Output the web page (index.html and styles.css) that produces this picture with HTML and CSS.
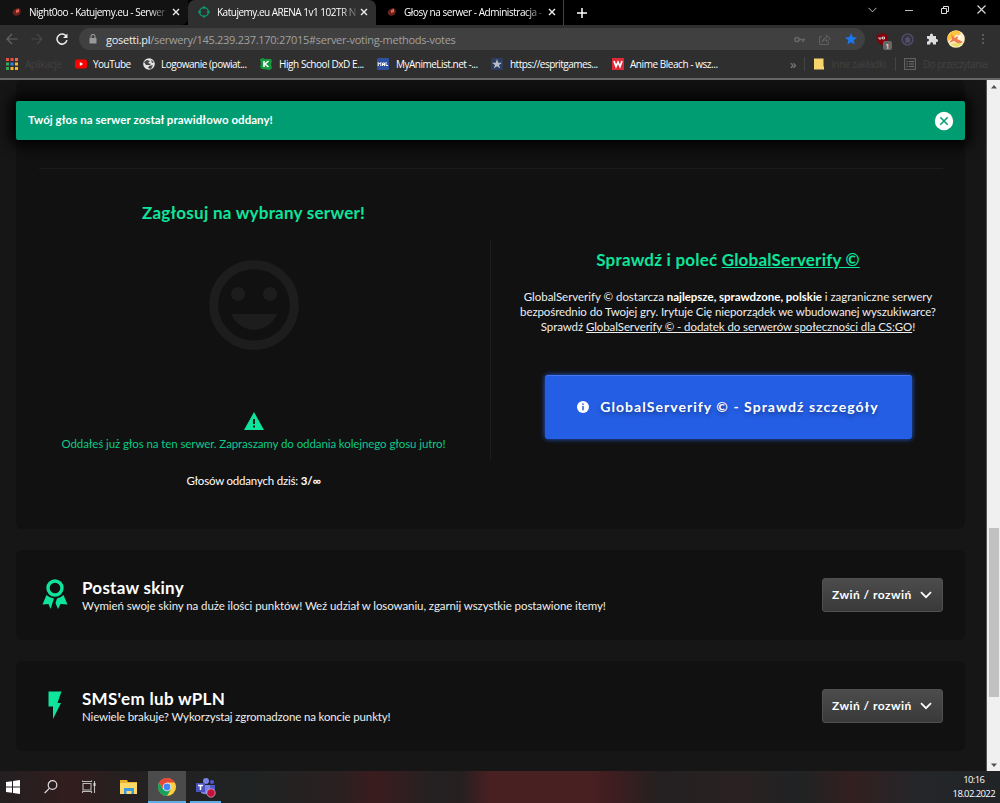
FILE: index.html
```
<!DOCTYPE html>
<html lang="pl">
<head>
  <meta charset="UTF-8" />
  <meta name="viewport" content="width=device-width, initial-scale=1.0" />
  <title>Katujemy.eu ARENA 1v1 102TR</title>
  <link rel="stylesheet" href="styles.css">
</head>
<body>

  <!-- Tabs -->
  <div class="tabs">
    <div class="tab tab-first">
      <svg class="tab-icon" viewBox="0 0 12 12"><path d="M2 8Q1 4 5 3Q7 1 9 3Q11 6 8 9Q4 11 2 8Z" fill="#6d211d"/><path d="M5 4L8 3L8 6L5 7Z" fill="#df6553"/></svg>
      <span class="tab-title t1">Night0oo - Katujemy.eu - Serwer</span>
      <svg class="tab-close" viewBox="0 0 8 8"><path d="M1 1L7 7M7 1L1 7"/></svg>
    </div>
    <div class="tab tab-active">
      <svg class="tab-icon" viewBox="0 0 12 12"><circle cx="6" cy="6" r="4.4" fill="none" stroke="#0a9a70" stroke-width="1.4"/><path d="M6 0V3M6 9V12M0 6H3M9 6H12" stroke="#0a9a70" stroke-width="1.3"/></svg>
      <span class="tab-title t2">Katujemy.eu ARENA 1v1 102TR N</span>
      <svg class="tab-close" viewBox="0 0 8 8"><path d="M1 1L7 7M7 1L1 7"/></svg>
    </div>
    <div class="tab tab-last">
      <svg class="tab-icon" viewBox="0 0 12 12"><path d="M2 8Q1 4 5 3Q7 1 9 3Q11 6 8 9Q4 11 2 8Z" fill="#6d211d"/><path d="M5 4L8 3L8 6L5 7Z" fill="#df6553"/></svg>
      <span class="tab-title t3">Głosy na serwer - Administracja -</span>
      <svg class="tab-close" viewBox="0 0 8 8"><path d="M1 1L7 7M7 1L1 7"/></svg>
    </div>
    <svg class="tab-new" viewBox="0 0 10 10"><path d="M5 0V10M0 5H10" stroke="#fff" stroke-width="1.5"/></svg>
    <div class="window-buttons">
      <svg width="9" height="6" viewBox="0 0 9 6"><path d="M.5 .8L4.5 4.8L8.5 .8" fill="none" stroke="#bbb"/></svg>
      <svg width="8" height="8" viewBox="0 0 8 8"><path d="M0 4.5H8" stroke="#bbb"/></svg>
      <svg width="8" height="8" viewBox="0 0 8 8"><path d="M.5 2.5H5.5V7.5H.5ZM2.5 2.5V.5H7.5V5.5H5.5" fill="none" stroke="#ddd"/></svg>
      <svg width="9" height="9" viewBox="0 0 9 9"><path d="M.5 .5L8.5 8.5M8.5 .5L.5 8.5" stroke="#ddd" stroke-width="1.1"/></svg>
    </div>
  </div>

  <!-- Address bar -->
  <div class="toolbar">
    <svg class="nav" viewBox="0 0 12 12"><path d="M6 1L1 6L6 11M1 6H11.500" fill="none" stroke="#666" stroke-width="1.2"/></svg>
    <svg class="nav" viewBox="0 0 12 12"><path d="M6 1L11 6L6 11M11 6H.5" fill="none" stroke="#484848" stroke-width="1.2"/></svg>
    <svg class="nav" viewBox="0 0 12 12"><path d="M10.300 3.500A5 5 0 1 0 10.900 7.200" fill="none" stroke="#eee" stroke-width="1.5"/><path d="M11.500 .5V5H7Z" fill="#eee"/></svg>
    <div class="address">
      <svg class="lock" viewBox="0 0 8 10"><path d="M2 4V2.500A2 2 0 0 1 6 2.500V4" fill="none" stroke="#999" stroke-width="1.1"/><rect x=".5" y="4" width="7" height="5.500" rx=".6" fill="#999"/></svg>
      <span class="url"><b>gosetti.pl</b>/serwery/145.239.237.170:27015#server-voting-methods-votes</span>
      <svg class="key" width="11" height="7" viewBox="0 0 11 7"><circle cx="3" cy="3.500" r="2.100" fill="none" stroke="#666" stroke-width="1.500"/><path d="M5 3.500H11M9 3.500V6" stroke="#666" stroke-width="1.700"/></svg>
      <svg width="12" height="11" viewBox="0 0 12 11"><path d="M3 2.500H.6V10.400H9.500V8M3 8Q3.500 4 7.500 3.800V1.200L11.300 4.600L7.500 7.700V5.800Q5 5.500 3 8Z" fill="none" stroke="#626262"/></svg>
      <svg width="12" height="12" viewBox="0 0 12 12"><path d="M6 0L7.700 4.100L12 4.500L8.700 7.300L9.700 11.600L6 9.300L2.300 11.600L3.300 7.300L0 4.500L4.300 4.100Z" fill="#1b75ec"/></svg>
    </div>
    <div class="extensions">
      <span class="ublock">
        <svg width="12" height="12" viewBox="0 0 12 12"><path d="M6 0Q8 1.500 11.300 1.500V6Q11 9.500 6 12Q1 9.500 .7 6V1.500Q4 1.500 6 0Z" fill="#84000a"/><path d="M3 4V6H5V4M6.500 4H8.500V6H6.500Z" stroke="#ddd" stroke-width=".9" fill="none"/></svg>
        <span class="count">1</span>
      </span>
      <svg width="13" height="13" viewBox="0 0 13 13"><circle cx="6.500" cy="6.500" r="5.500" fill="#35333f" stroke="#514a63" stroke-width="1.500"/><path d="M4 5H6V3.500H7.500V5H9V9.500H4V8L5.500 7L4 6.500Z" fill="#54506b"/></svg>
      <svg width="12" height="12" viewBox="0 0 12 12"><path d="M1 3H4V2A1.500 1.500 0 0 1 7 2V3H10V6H10.500A1.500 1.500 0 0 1 10.500 9H10V11.500H7V10.500A1.300 1.300 0 0 0 4.300 10.500V11.500H1V8.500H1.600A1.300 1.300 0 0 0 1.600 5.700H1Z" fill="#ddd"/></svg>
      <svg class="avatar" width="18" height="18" viewBox="0 0 18 18"><circle cx="9" cy="9" r="8.800" fill="#fff0c7"/><path d="M1 5Q5 0 12 1L14 4L9 5L6 8L1 11Z" fill="#ffc340"/><path d="M4 4L8 8L13 4L10 9L16 12L12 14L7 11L2 13L5 9Z" fill="#ef7a50"/><path d="M3 14Q8 12 15 14Q10 20 3 14Z" fill="#e3df6a"/><path d="M10 6L14 5L13 9Z" fill="#fff"/></svg>
      <svg width="4" height="12" viewBox="0 0 4 12"><path d="M1 1H3V3H1ZM1 5H3V7H1ZM1 9H3V11H1Z" fill="#5a5a5a"/></svg>
    </div>
  </div>

  <!-- Bookmarks -->
  <div class="bookmarks">
    <div class="bm bm-apps">
      <svg viewBox="0 0 12 12"><path d="M0 0H3V3H0ZM4.500 0H7.500V3H4.500Z" fill="#e45145"/><path d="M9 0H12V3H9Z" fill="#e8694c"/><path d="M0 4.500H3V7.500H0ZM0 9H3V12H0Z" fill="#31a85a"/><path d="M4.500 4.500H7.500V7.500H4.500Z" fill="#3284ed"/><path d="M9 4.500H12V7.500H9ZM4.500 9H7.500V12H4.500ZM9 9H12V12H9Z" fill="#f3b92d"/></svg>
      <span class="dim">Aplikacje</span>
    </div>
    <div class="bm bm-yt">
      <svg viewBox="0 0 12 12"><rect y="1.500" width="12" height="9" rx="2" fill="#f00"/><path d="M4.800 4V8L8.200 6Z" fill="#fff"/></svg>
      <span>YouTube</span>
    </div>
    <div class="bm bm-log">
      <svg viewBox="0 0 12 12"><circle cx="6" cy="6" r="5.800" fill="#e4e4e4"/><path d="M1 4L4 2L7 3L5 5L8 6L7 7H3ZM8 2L11 4L9 5ZM6 8L10 7L8 11L5 10Z" fill="#444"/></svg>
      <span>Logowanie (powiat...</span>
    </div>
    <div class="bm bm-dxd">
      <svg viewBox="0 0 12 12"><path d="M0 1L2 .5L3 0L5 1H11L12 3L11 6L12 10L10 12L2 11L0 9L1 6Z" fill="#14993d"/><path d="M4 3V9M8.500 3L5 6L8.500 9" fill="none" stroke="#fff" stroke-width="1.600"/></svg>
      <span>High School DxD E...</span>
    </div>
    <div class="bm bm-mal">
      <svg viewBox="0 0 12 12"><rect width="12" height="12" rx="1" fill="#2e51a2"/><path d="M1.200 8V4.500L2.500 6L3.800 4.500V8M5.500 8V5H7.500V8M5.500 6.500H7.500M9 4V7.500H11" fill="none" stroke="#fff"/></svg>
      <span>MyAnimeList.net -...</span>
    </div>
    <div class="bm bm-esp">
      <svg viewBox="0 0 12 12"><rect width="12" height="12" fill="#2d3d60"/><path d="M6 1L7.300 4.700H11L8 7L9.200 10.500L6 8.300L2.800 10.500L4 7L1 4.700H4.700Z" fill="#b8bdc8"/></svg>
      <span>https://espritgames...</span>
    </div>
    <div class="bm bm-wsz">
      <svg viewBox="0 0 12 12"><rect width="12" height="12" fill="#df2838"/><path d="M2 3L4 8.500L6 4L8 8.500L10 3" fill="none" stroke="#fff" stroke-width="1.700"/></svg>
      <span>Anime Bleach - wsz...</span>
    </div>
    <span class="more">»</span>
    <div class="bm bm-other">
      <svg viewBox="0 0 12 12"><path d="M1 .5H10.500V8.500H11V11.500H1Z" fill="#f6d66c"/></svg>
      <span class="dim">Inne zakładki</span>
    </div>
    <div class="bm bm-read">
      <svg viewBox="0 0 12 12"><rect x=".6" y=".6" width="10.800" height="10.800" fill="none" stroke="#66686b"/><path d="M2.500 3.500H4M5 3.500H10M2.500 6H4M5 6H10M2.500 8.500H4M5 8.500H10" stroke="#707275"/></svg>
      <span class="dim">Do przeczytania</span>
    </div>
  </div>

  <!-- Page -->
  <div class="viewport">
    <div class="page">
      <div class="alert">
        <span>Twój głos na serwer został prawidłowo oddany!</span>
        <svg width="20" height="20" viewBox="0 0 20 20"><circle cx="10" cy="10" r="9.200" fill="#fff"/><path d="M6.300 6.300L13.700 13.700M13.700 6.300L6.300 13.700" stroke="#009c72" stroke-width="1.500"/></svg>
      </div>

      <div class="panel vote">
        <div class="columns">
          <div class="col-vote">
            <h2 class="vote-title">Zagłosuj na wybrany serwer!</h2>
            <svg class="smile" viewBox="0 0 90 90"><circle cx="45" cy="45" r="40.300" fill="none" stroke="#1d1d1d" stroke-width="9"/><circle cx="29" cy="34" r="7" fill="#1d1d1d"/><circle cx="61" cy="34" r="7" fill="#1d1d1d"/><path d="M22 54H68C59 75 31 75 22 54Z" fill="#1d1d1d"/></svg>
            <svg class="warn" viewBox="0 0 20 18"><path d="M10 0L20 18H0Z" fill="#0ee49b"/><path d="M10 7V12M10 13.500V15.500" stroke="#111" stroke-width="1.900"/></svg>
            <p class="voted">Oddałeś już głos na ten serwer. Zapraszamy do oddania kolejnego głosu jutro!</p>
            <p class="today">Głosów oddanych dziś: <b>3/∞</b></p>
          </div>
          <div class="split"></div>
          <div class="col-promo">
            <h2 class="promo-title">Sprawdź i poleć <u>GlobalServerify ©</u></h2>
            <p class="promo-text">
              <span class="p1">GlobalServerify © dostarcza <b>najlepsze, sprawdzone, polskie</b> i zagraniczne serwery</span><br>
              <span class="p2">bezpośrednio do Twojej gry. Irytuje Cię nieporządek we wbudowanej wyszukiwarce?</span><br>
              <span class="p3">Sprawdź <u>GlobalServerify © - dodatek do serwerów społeczności dla CS:GO</u>!</span>
            </p>
            <button class="promo-btn">
              <svg width="12" height="12" viewBox="0 0 12 12"><circle cx="6" cy="6" r="6" fill="#fff"/><path d="M6 2.500V4M6 5V9.300" stroke="#245ee5" stroke-width="1.500"/></svg>
              <span>GlobalServerify © - Sprawdź szczegóły</span>
            </button>
          </div>
        </div>
      </div>

      <div class="panel method">
        <svg class="method-icon" viewBox="0 0 26 30"><circle cx="13" cy="9" r="7" fill="none" stroke="#0ee49b" stroke-width="3.400"/><path d="M4.500 16Q7.500 19 12 19.500L8.500 30L6.500 25L.5 25.500Z" fill="#0ee49b"/><path d="M21.500 16Q18.500 19 15 19.500L13.500 24L16 30L18.500 25L25.500 25.500Z" fill="#0ee49b"/></svg>
        <div class="method-text">
          <h3 class="m1">Postaw skiny</h3>
          <p class="d1">Wymień swoje skiny na duże ilości punktów! Weź udział w losowaniu, zgarnij wszystkie postawione itemy!</p>
        </div>
        <button class="toggle"><span>Zwiń / rozwiń</span><svg width="12" height="8" viewBox="0 0 12 8"><path d="M1 1.200L6 6.200L11 1.200" fill="none" stroke="#fff" stroke-width="1.700"/></svg></button>
      </div>

      <div class="panel method">
        <svg class="method-icon" viewBox="0 0 26 30"><path d="M6.500 1.500H19.500L15.500 13H19L11 29V16.500H6.500Z" fill="#0ee49b"/></svg>
        <div class="method-text">
          <h3 class="m2">SMS'em lub wPLN</h3>
          <p class="d2">Niewiele brakuje? Wykorzystaj zgromadzone na koncie punkty!</p>
        </div>
        <button class="toggle"><span>Zwiń / rozwiń</span><svg width="12" height="8" viewBox="0 0 12 8"><path d="M1 1.200L6 6.200L11 1.200" fill="none" stroke="#fff" stroke-width="1.700"/></svg></button>
      </div>
    </div>

    <div class="scrollbar">
      <svg width="6" height="4" viewBox="0 0 6 4"><path d="M0 3.500L3 0L6 3.500Z" fill="#505050"/></svg>
      <div class="thumb"></div>
      <svg width="6" height="4" viewBox="0 0 6 4"><path d="M0 .5L3 4L6 .5Z" fill="#505050"/></svg>
    </div>
  </div>

  <!-- Taskbar -->
  <div class="taskbar">
    <div class="task"><svg width="14" height="14" viewBox="0 0 14 14"><path d="M0 2L6 1.200V6.500H0ZM7 1L14 0V6.500H7ZM0 7.500H6V12.800L0 12ZM7 7.500H14V14L7 13Z" fill="#fff"/></svg></div>
    <div class="task"><svg width="14" height="14" viewBox="0 0 14 14"><circle cx="8.500" cy="5" r="4.300" fill="none" stroke="#ddd" stroke-width="1.200"/><path d="M5.300 8.300L.7 13" stroke="#ddd" stroke-width="1.200"/></svg></div>
    <div class="task"><svg width="14" height="14" viewBox="0 0 14 14"><path d="M1 3.500H9V10H1ZM.5 2V.5M9.500 .5V2M.5 1.500H9.500M.5 13V11.500H9.500V13M12.500 1V3M12.500 6V13" fill="none" stroke="#bbb" stroke-width="1.100"/><path d="M11.500 3H13.500V6H11.500Z" fill="#ddd"/></svg></div>
    <div class="task"><svg width="18" height="16" viewBox="0 0 18 16"><path d="M0 1H7L8 3H17V15H0Z" fill="#edb22b"/><path d="M0 4H17V15H0Z" fill="#ffd968"/><path d="M4 9H14V15H11.500V12H6.500V15H4Z" fill="#3b9be0"/></svg></div>
    <div class="task task-chrome"><svg width="18" height="18" viewBox="0 0 18 18"><circle cx="9" cy="9" r="9" fill="#ffcf3f"/><path d="M1.200 4.500A9 9 0 0 1 16.800 4.500H9L5.100 11.200Z" fill="#e5483a"/><path d="M1.200 4.500L5.100 11.250L12.900 11.250L9 18A9 9 0 0 1 1.200 4.500Z" fill="#18a05c"/><circle cx="9" cy="9" r="4.300" fill="#f4f4f4"/><circle cx="9" cy="9" r="3.400" fill="#4285f4"/></svg></div>
    <div class="task task-teams"><svg width="21" height="20" viewBox="0 0 21 20"><circle cx="11" cy="3" r="3" fill="#7b83eb"/><circle cx="17" cy="4" r="2.100" fill="#5059c9"/><path d="M6 7H15V14Q12 18 6 15Z" fill="#7b83eb"/><path d="M15 7H20V12Q18 15 15 14Z" fill="#5059c9"/><rect x="1" y="5" width="9" height="9" fill="#4b53bc"/><path d="M3 7.500H8M5.500 7.500V12" stroke="#fff" stroke-width="1.500"/><circle cx="16" cy="15" r="4.200" fill="#c4103b" stroke="#ddd" stroke-width=".6"/></svg></div>
    <div class="clock"><span>10:16</span><span>18.02.2022</span></div>
  </div>

</body>
</html>
```
FILE: styles.css
```
html, body {
  height: 100%;
  margin: 0;
  padding: 0;
}

body {
  background: #161616;
  color: #fff;
  font-family: 'Open Sans', 'Noto Sans', sans-serif;
  font-size: 10px;
  display: flex;
  flex-direction: column;
  overflow: hidden;
}

* {
  box-sizing: border-box;
}

svg {
  display: block;
  flex-shrink: 0;
}

span {
  white-space: nowrap;
}

h2, h3, p {
  margin: 0;
}

/* browser tabs */
.tabs {
  height: 25px;
  background: #000;
  display: flex;
  align-items: center;
  flex-shrink: 0;
}

.tab {
  width: 188px;
  height: 25px;
  padding: 0 8px 1px 10px;
  display: flex;
  align-items: center;
}

.tab-first {
  background: #121212;
  border-radius: 0 0 7px 0;
  padding-left: 11px;
}

.tab-active {
  background: #2f2f2f;
  border-radius: 7px 7px 0 0;
}

.tab-last {
  border-right: 1px solid #444;
  padding-right: 7px;
}

.tab-icon {
  width: 12px;
  height: 12px;
  margin-right: 6px;
}

.tab-active .tab-icon {
  margin-right: 7px;
}

.tab-title {
  mask-image: linear-gradient(to right, #000 88%, rgba(0,0,0,0.2));
}

.t1 {
  letter-spacing: -0.47px;
}

.t2 {
  letter-spacing: -0.5px;
}

.t3 {
  letter-spacing: -0.45px;
}

.tab-close {
  width: 8px;
  height: 8px;
  margin-left: auto;
  stroke: #eee;
  stroke-width: 1.4;
}

.tab-new {
  width: 10px;
  height: 10px;
  margin-left: 13px;
}

.window-buttons {
  margin-left: auto;
  padding: 0 14px 6px 0;
  display: flex;
  align-items: center;
  gap: 28px;
}

/* address bar */
.toolbar {
  height: 28px;
  background: #2f2f2f;
  display: flex;
  align-items: center;
  flex-shrink: 0;
  padding-left: 6px;
}

.nav {
  width: 12px;
  height: 12px;
  margin-right: 13px;
}

.address {
  width: 786px;
  height: 22px;
  margin-left: -2px;
  border-radius: 11px;
  background: #404040;
  display: flex;
  align-items: center;
  padding: 0 8px 0 10px;
  gap: 14px;
}

.lock {
  width: 8px;
  height: 10px;
}

.url {
  color: #a0a0a0;
  font-size: 11px;
  letter-spacing: -0.28px;
  margin-left: -5px;
}

.url b {
  color: #eee;
  font-weight: 400;
}

.key {
  margin-left: auto;
}

.extensions {
  flex: 1;
  display: flex;
  align-items: center;
  justify-content: space-between;
  padding: 0 15px 0 11px;
}

.avatar {
  margin: 0 4px 0 -4px;
}

.ublock {
  position: relative;
}

.count {
  position: absolute;
  left: 7px;
  top: 8px;
  width: 9px;
  height: 9px;
  border-radius: 2px;
  background: #666;
  font-size: 8px;
  line-height: 9px;
  text-align: center;
}

/* bookmarks */
.bookmarks {
  height: 27px;
  background: #2f2f2f;
  border-bottom: 2px solid #666;
  display: flex;
  align-items: center;
  flex-shrink: 0;
  padding: 0 0 3px 6px;
}

.bm {
  display: flex;
  align-items: center;
  gap: 6px;
}

.bm svg {
  width: 12px;
  height: 12px;
}

.bm-apps {
  width: 69px;
  gap: 7px;
  letter-spacing: -0.55px;
}

.bm-yt {
  width: 68px;
  letter-spacing: -0.5px;
}

.bm-log {
  width: 117px;
  letter-spacing: -0.48px;
}

.bm-dxd {
  width: 117px;
  gap: 7px;
  letter-spacing: -0.43px;
}

.bm-mal {
  width: 114px;
  gap: 7px;
  letter-spacing: -0.5px;
}

.bm-esp {
  width: 121px;
  gap: 7px;
  letter-spacing: -0.53px;
}

.bm-wsz {
  width: 178px;
  letter-spacing: -0.45px;
}

.more {
  width: 14px;
  font-size: 13px;
  line-height: 14px;
  color: #888;
}

.bm-other {
  width: 91px;
  border-left: 1px solid #444;
  padding-left: 8px;
  letter-spacing: -0.45px;
}

.bm-read {
  border-left: 1px solid #444;
  padding-left: 8px;
  gap: 7px;
  letter-spacing: -0.65px;
}

.dim {
  color: #414141;
}

/* page */
.viewport {
  flex: 1;
  min-height: 0;
  display: flex;
  font-family: Lato, 'Open Sans', sans-serif;
  font-size: 11.5px;
}

.page {
  position: relative;
  flex: 1;
  padding: 0 21px 0 16px;
  border-right: 1px solid #555;
  overflow: hidden;
}

.alert {
  position: absolute;
  left: 16px;
  right: 21px;
  top: 21px;
  height: 39px;
  padding: 0 11px 0 12px;
  display: flex;
  align-items: center;
  justify-content: space-between;
  background: #009c72;
  border-radius: 2px;
  box-shadow: 0 0 14px 5px #000;
  font-weight: 700;
}

.alert span {
  letter-spacing: 0.05px;
  padding-bottom: 2px;
}

.panel {
  background: #111;
  border-radius: 6px;
  margin-bottom: 21px;
}

.vote {
  height: 449px;
  padding: 88px 22px 0 23px;
}

.columns {
  border-top: 1px solid #1c1c1c;
  display: grid;
  grid-template-columns: 429px 1px 430px;
  column-gap: 22px;
  text-align: center;
}

.col-vote {
  display: flex;
  flex-direction: column;
  align-items: center;
}

h2 {
  color: #0ee49b;
  font-size: 17px;
  line-height: 22px;
  white-space: nowrap;
}

.vote-title {
  margin-top: 33px;
  letter-spacing: 0.25px;
}

.smile {
  width: 90px;
  height: 90px;
  margin-top: 36px;
}

.warn {
  width: 20px;
  height: 18px;
  margin-top: 62px;
}

.voted {
  color: #0cc98a;
  line-height: 16px;
  margin-top: 6px;
  letter-spacing: -0.09px;
  white-space: nowrap;
}

.today {
  line-height: 16px;
  margin-top: 21px;
  letter-spacing: -0.2px;
}

.split {
  height: 220px;
  margin-top: 71px;
  background: #1d1d1d;
}

.col-promo {
  padding-top: 80px;
}

.promo-title {
  letter-spacing: 0.2px;
}

.promo-text {
  color: #eee;
  line-height: 15px;
  margin-top: 18px;
}

.promo-text b {
  color: #fff;
}

.p1 {
  letter-spacing: -0.03px;
}

.p2, .p3 {
  letter-spacing: -0.09px;
}

.promo-btn {
  width: 367px;
  height: 64px;
  margin-top: 41px;
  padding: 0 0 2px;
  border: 0;
  border-top: 1px solid #4379ed;
  border-radius: 3px;
  background: #245ee5;
  box-shadow: 0 0 5px #245ee5;
  color: #fff;
  font-family: inherit;
  font-size: 14px;
  font-weight: 700;
  letter-spacing: 1.04px;
  text-shadow: 0 2px 4px rgba(0,0,0,0.4);
  display: inline-flex;
  align-items: center;
  justify-content: center;
  gap: 11px;
}

.method {
  height: 90px;
  padding: 0 22px 0 26px;
  display: flex;
  align-items: center;
}

.method-icon {
  width: 26px;
  height: 30px;
  margin: 0 14px 3px 0;
}

.method-text {
  flex: 1;
  padding-top: 2px;
}

h3 {
  font-size: 17px;
  line-height: 20px;
}

.m1 {
  letter-spacing: 0.25px;
}

.m2 {
  letter-spacing: 0.3px;
}

.method-text p {
  line-height: 16px;
  color: #eee;
  white-space: nowrap;
}

.d1 {
  letter-spacing: -0.09px;
}

.d2 {
  letter-spacing: -0.14px;
}

.toggle {
  width: 121px;
  height: 34px;
  padding: 0 10px 1px 9px;
  border: 1px solid #505050;
  border-radius: 3px;
  background: linear-gradient(#4c4c4c, #393939);
  color: #fff;
  font-family: inherit;
  font-size: 12px;
  font-weight: 700;
  letter-spacing: 0.45px;
  display: flex;
  align-items: center;
  justify-content: space-between;
}

.scrollbar {
  width: 13px;
  background: #f0f0f0;
  display: flex;
  flex-direction: column;
  align-items: center;
  padding: 5px 0 4px;
}

.thumb {
  width: 10px;
  height: 169px;
  margin: 439px 0 auto;
  background: #c1c1c1;
}

/* taskbar */
.taskbar {
  height: 32px;
  flex-shrink: 0;
  display: flex;
  background: linear-gradient(to right, #231f20 0, #321d1e 7%, #242021 13%, #202323 25%, #2a2021 34%, #391c1e 37%, #361d1f 39%, #252122 43%, #251f20 46%, #482022 49%, #482022 59%, #401d20 61%, #242021 66%, #2a2222 74%, #202324 80%, #331f20 85%, #24262a 92%, #212427 100%);
}

.task {
  width: 38px;
  display: flex;
  align-items: center;
  justify-content: center;
}

.task:first-child {
  width: 26px;
}

.task:nth-child(2) {
  width: 49px;
}

.task:nth-child(3) {
  width: 27px;
}

.task:nth-child(4) {
  width: 46px;
  padding-left: 8px;
}

.task-chrome {
  background: #4c4b4b;
  border-bottom: 2px solid #64ade3;
  padding-top: 2px;
}

.task-teams {
  width: 31px;
  margin-left: 4px;
  padding-top: 3px;
  border-bottom: 2px solid #64ade3;
}

.clock {
  margin-left: auto;
  padding: 2px 5px 0 0;
  font-size: 9.5px;
  line-height: 14px;
  letter-spacing: -0.6px;
  display: flex;
  flex-direction: column;
  align-items: center;
}
```
